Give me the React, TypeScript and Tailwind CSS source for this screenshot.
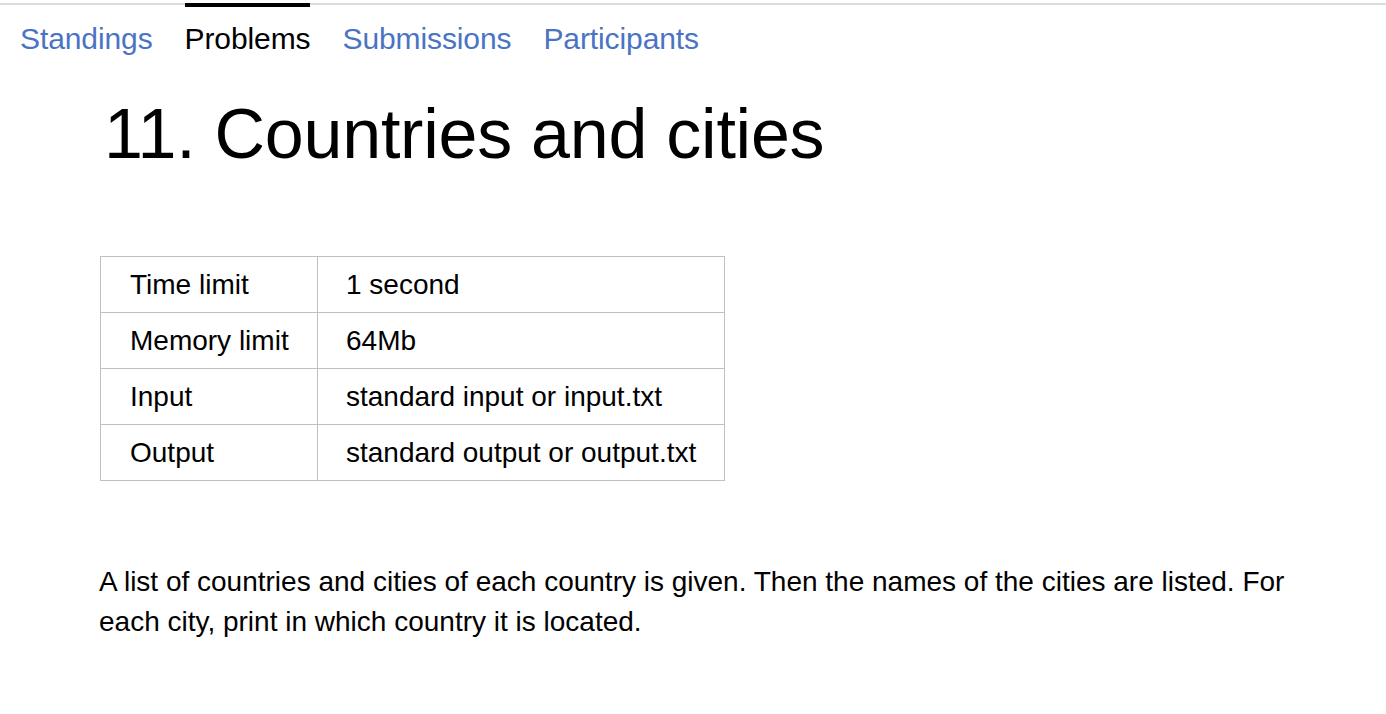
import React from "react";

const rows: [string, string][] = [
  ["Time limit", "1 second"],
  ["Memory limit", "64Mb"],
  ["Input", "standard input or input.txt"],
  ["Output", "standard output or output.txt"],
];

export default function App() {
  return (
    <div
      className="min-h-[714px] w-full bg-white text-black"
      style={{ fontFamily: '"Liberation Sans", Arial, Helvetica, sans-serif' }}
    >
      <div className="pt-[3px]">
        <nav className="flex border-t-2 border-[#dcdcdc] pl-[20px] text-[30px] leading-[34px] tracking-[-0.1px]">
          <a className="mr-[32px] pt-[17px] text-[#4a74c3]">Standings</a>
          <a className="-mt-[2px] mr-[32px] border-t-4 border-black pt-[15px] text-black">Problems</a>
          <a className="mr-[32px] pt-[17px] text-[#4a74c3]">Submissions</a>
          <a className="pt-[17px] text-[#4a74c3]">Participants</a>
        </nav>
      </div>
      <div className="pl-[99px] pr-[60px]">
        <h1 className="mt-[38px] pl-[5px] text-[70px] leading-[80px] font-normal tracking-[-0.25px]">
          11. Countries and cities
        </h1>
        <table className="mt-[82px] ml-px w-[625px] border-collapse text-[28px] leading-[32px]">
          <tbody>
            {rows.map(([k, v]) => (
              <tr key={k} className="h-[56px]">
                <td className="w-[217px] border border-[#c0c0c0] pl-[29px] pt-px align-middle">{k}</td>
                <td className="border border-[#c0c0c0] pl-[28px] pt-px align-middle">{v}</td>
              </tr>
            ))}
          </tbody>
        </table>
        <p className="mt-[81px] max-w-[1220px] text-[28px] leading-[40px]">
          A list of countries and cities of each country is given. Then the names of the cities are listed. For
          each city, print in which country it is located.
        </p>
      </div>
    </div>
  );
}
